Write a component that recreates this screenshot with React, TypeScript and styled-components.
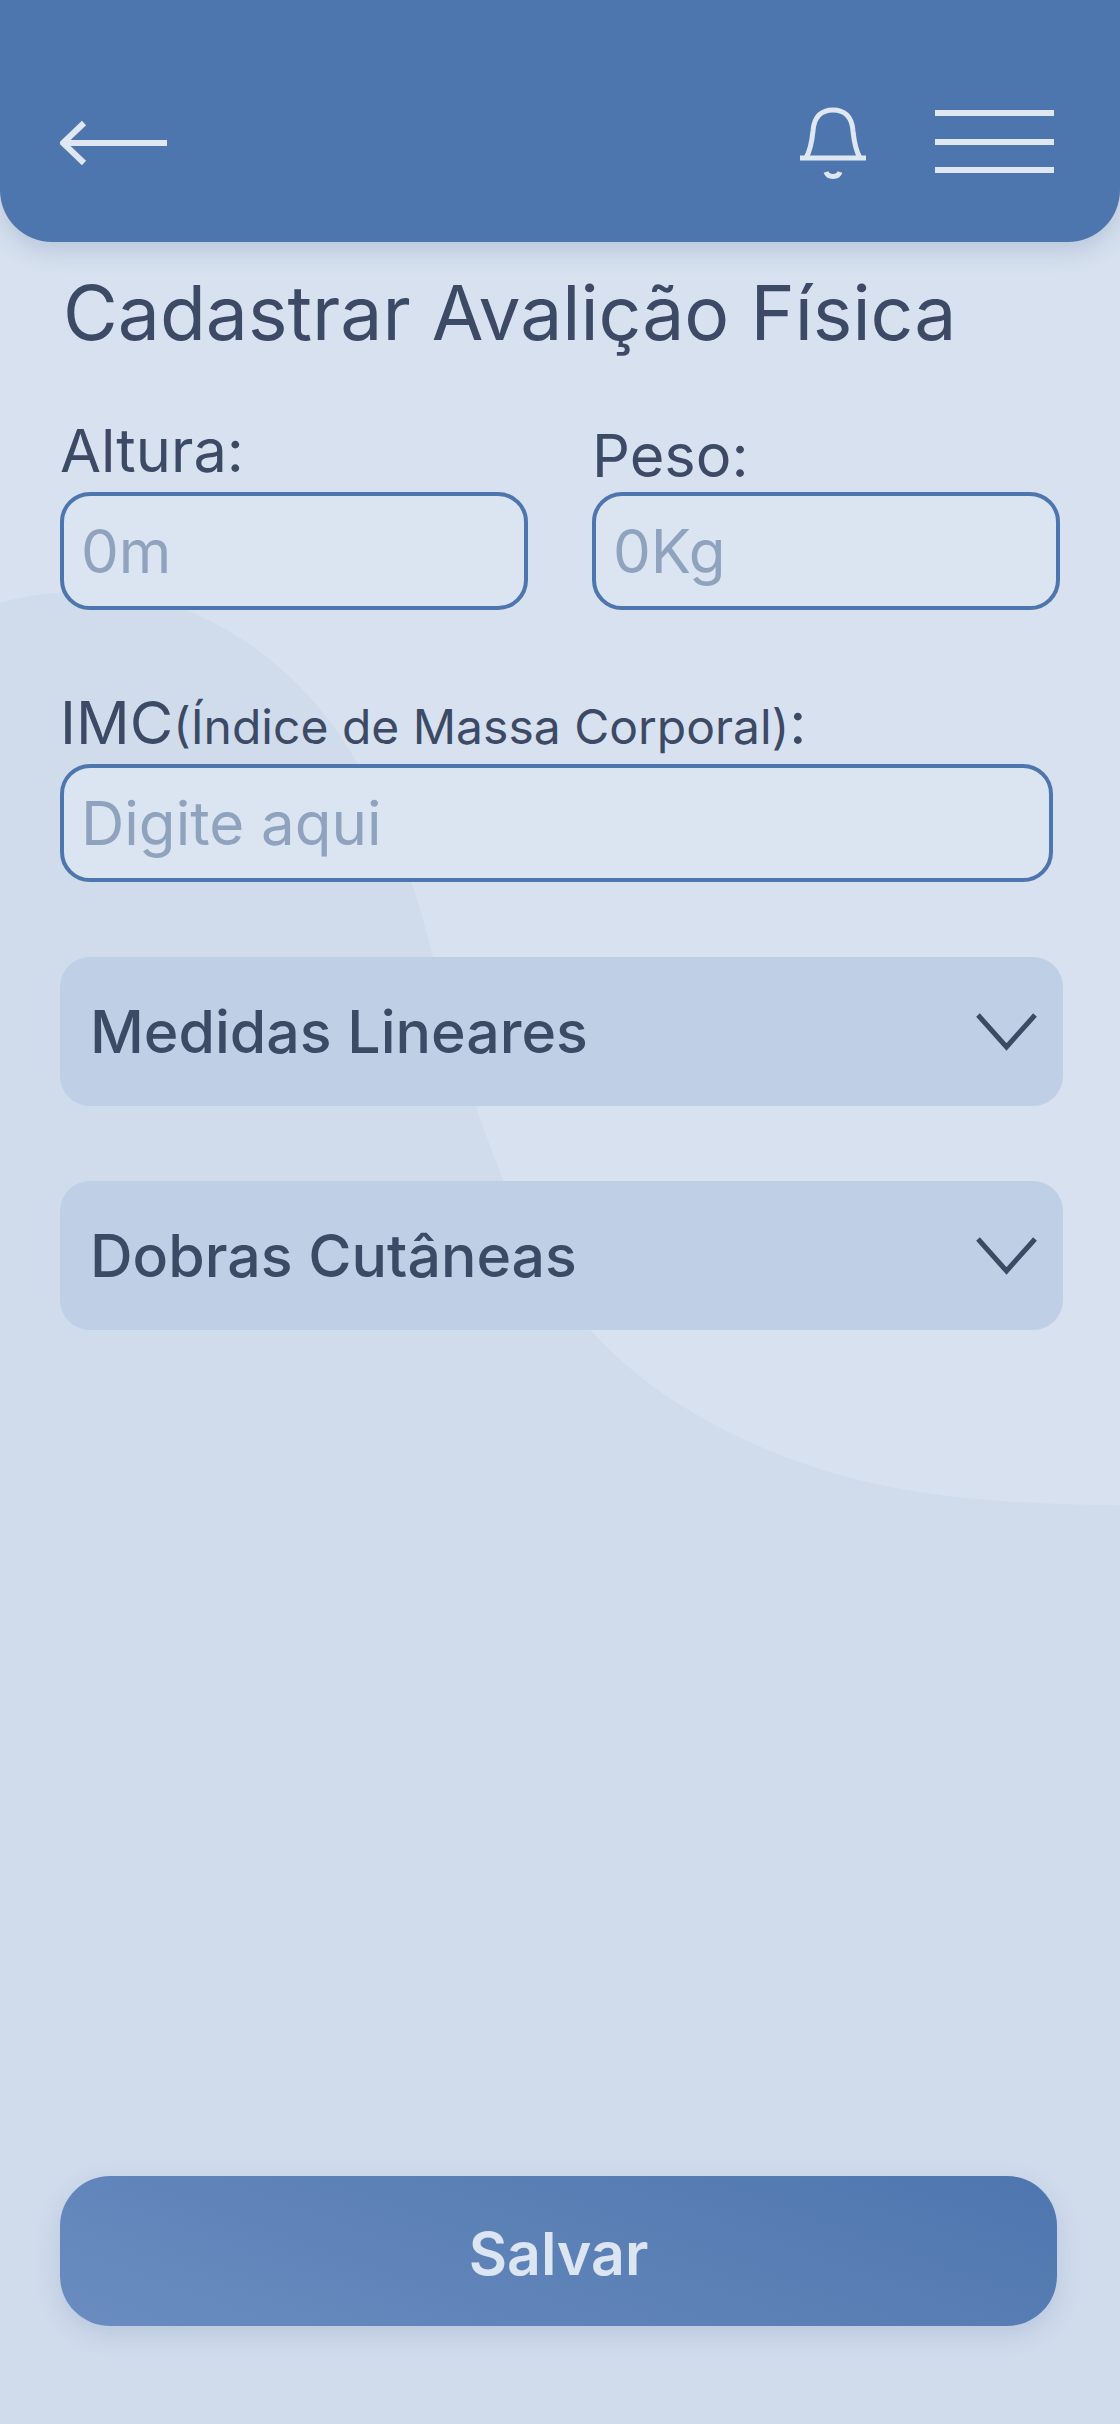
import React from "react";
import styled, { createGlobalStyle } from "styled-components";

const GlobalStyle = createGlobalStyle`
  * {
    box-sizing: border-box;
  }
  body {
    margin: 0;
    background: #d0dcec;
    font-family: Inter, "Liberation Sans", sans-serif;
  }
`;

const Page = styled.div`
  position: relative;
  width: 1120px;
  height: 2424px;
  overflow: hidden;
  display: flex;
  flex-direction: column;
  background: #d7e1ef;
`;

const Backdrop = styled.svg`
  position: absolute;
  left: 0;
  top: 0;
`;

const Header = styled.header`
  position: relative;
  height: 242px;
  flex: none;
  padding: 107px 66px 0 60px;
  display: flex;
  justify-content: space-between;
  align-items: flex-start;
  background: #4e76ae;
  border-radius: 0 0 52px 52px;
  box-shadow: 0 8px 24px rgba(60, 90, 140, 0.2);
`;

const HeaderActions = styled.div`
  display: flex;
  gap: 68px;
`;

const Content = styled.main`
  position: relative;
  flex: 1;
  padding: 32px 57px 98px 60px;
  display: flex;
  flex-direction: column;
`;

const Title = styled.h1`
  margin: 0 0 65px 3px;
  font-size: 75px;
  line-height: 78px;
  font-weight: 400;
  color: #3c4a66;
`;

const FieldRow = styled.div`
  display: flex;
  gap: 64px;
  align-items: flex-end;
`;

const Field = styled.label<{ $width: number }>`
  display: flex;
  flex-direction: column;
  width: ${(p) => p.$width}px;
`;

const FieldLabel = styled.span<{ $gap?: number }>`
  font-size: 59.5px;
  line-height: 66px;
  color: #3c4a66;
  margin-bottom: ${(p) => p.$gap ?? 4}px;
`;

const Small = styled.span`
  font-size: 48px;
`;

const Input = styled.input`
  width: 100%;
  height: 118px;
  padding: 0 17px;
  border: 4px solid #4e76ae;
  border-radius: 30px;
  background: #dbe4f1;
  font-family: inherit;
  font-size: 60px;
  color: #3c4a66;
  outline: none;

  &::placeholder {
    color: #8fa3bf;
    opacity: 1;
  }
`;

const ImcField = styled(Field)`
  margin-top: 79px;
`;

const Accordion = styled.div`
  width: 1003px;
  height: 149px;
  margin-top: 75px;
  padding: 0 26px 0 30px;
  display: flex;
  align-items: center;
  justify-content: space-between;
  background: #bfd0e6;
  border-radius: 30px;
  font-size: 59px;
  font-weight: 500;
  color: #3c4a66;
`;

const SaveButton = styled.button`
  margin-top: auto;
  width: 997px;
  height: 150px;
  padding: 4px 0 0;
  border: none;
  border-radius: 50px;
  background: linear-gradient(200deg, #4e76ae 0%, #6a8cc0 100%);
  box-shadow: 0 8px 24px rgba(60, 90, 140, 0.16);
  font-family: inherit;
  font-size: 59px;
  font-weight: 600;
  color: #dce5f2;
`;

const BackIcon = () => (
  <svg width="110" height="70" viewBox="0 0 110 70" fill="none" stroke="#dfe7f3" strokeWidth="6">
    <path d="M2 36 H107" />
    <path d="M24 16 L3 36 L24 56" />
  </svg>
);

const BellIcon = () => (
  <svg width="68" height="74" viewBox="0 0 68 74" fill="none" stroke="#dfe7f3" strokeWidth="5">
    <path d="M1 51 H67 M7 51 C12 42 13 34 14 24 C15 9 23 3 34 3 C45 3 53 9 54 24 C55 34 56 42 61 51" />
    <path d="M27 65 C29 71 39 71 41 65" />
  </svg>
);

const MenuIcon = () => (
  <svg width="119" height="68" viewBox="0 0 119 68" fill="none" stroke="#dfe7f3" strokeWidth="6">
    <path d="M0 6 H119 M0 35 H119 M0 63 H119" />
  </svg>
);

const ChevronIcon = () => (
  <svg width="61" height="38" viewBox="0 0 61 38" fill="none" stroke="#3c4a66" strokeWidth="5">
    <path d="M2 2 L30.5 34 L59 2" />
  </svg>
);

const App: React.FC = () => {
  return (
    <>
      <GlobalStyle />
      <Page>
        <Backdrop width="1120" height="2424" viewBox="0 0 1120 2424">
          <path
            d="M0 603 C30 594 70 590 110 592 C170 595 245 630 300 687 C365 752 410 860 433 957 C465 1090 520 1255 592 1332 C650 1395 730 1440 822 1470 C910 1497 1010 1505 1120 1505 V2424 H0 Z"
            fill="#d0dcec"
          />
        </Backdrop>
        <Header>
          <BackIcon />
          <HeaderActions>
            <BellIcon />
            <MenuIcon />
          </HeaderActions>
        </Header>
        <Content>
          <Title>Cadastrar Avalição Física</Title>
          <FieldRow>
            <Field $width={468}>
              <FieldLabel $gap={9}>Altura:</FieldLabel>
              <Input placeholder="0m" />
            </Field>
            <Field $width={468}>
              <FieldLabel>Peso:</FieldLabel>
              <Input placeholder="0Kg" />
            </Field>
          </FieldRow>
          <ImcField $width={993}>
            <FieldLabel>
              IMC<Small>(Índice de Massa Corporal)</Small>:
            </FieldLabel>
            <Input placeholder="Digite aqui" />
          </ImcField>
          <Accordion>
            Medidas Lineares
            <ChevronIcon />
          </Accordion>
          <Accordion>
            Dobras Cutâneas
            <ChevronIcon />
          </Accordion>
          <SaveButton>Salvar</SaveButton>
        </Content>
      </Page>
    </>
  );
};

export default App;
